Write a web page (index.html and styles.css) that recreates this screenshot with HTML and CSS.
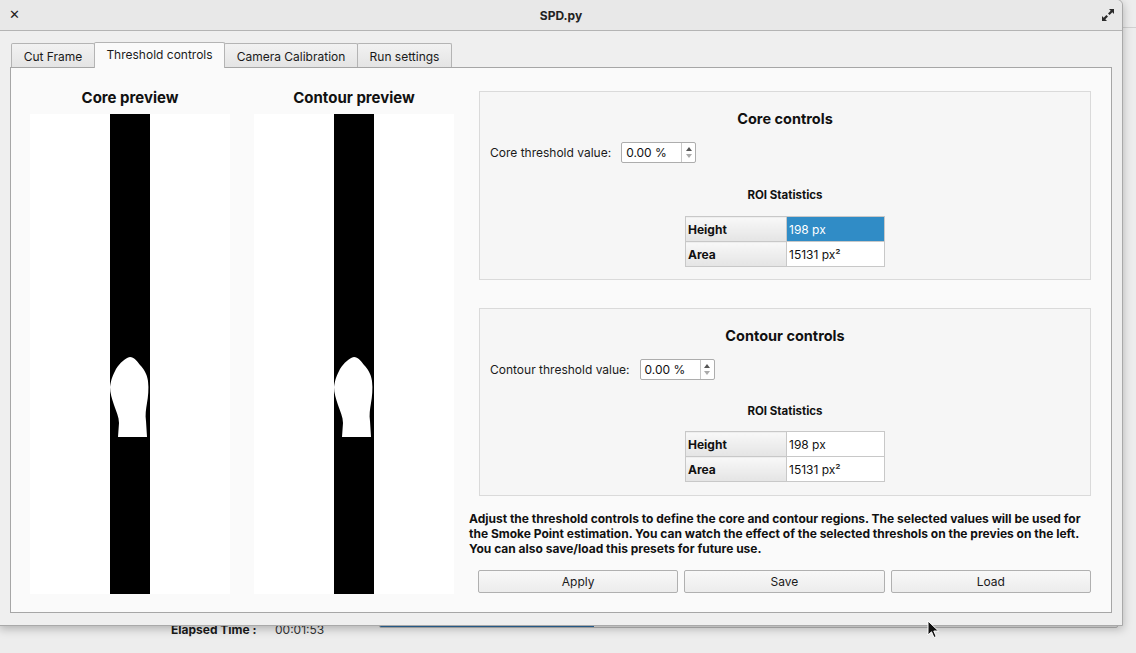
FILE: index.html
```html
<!DOCTYPE html>
<html>
<head>
<meta charset="utf-8">
<link rel="stylesheet" href="styles.css">
</head>
<body>
<div class="desktop">
  <div class="behind">
    <div class="behind-title"></div>
    <div class="behind-row">
      <span class="el-label">Elapsed Time :</span>
      <span class="el-value">00:01:53</span>
      <div class="progress"><div class="progress-fill"></div></div>
    </div>
  </div>

  <div class="window">
    <div class="titlebar">
      <span class="close">✕</span>
      <span class="title">SPD.py</span>
      <svg class="maxi" width="14" height="14" viewBox="0 0 14 14">
        <path d="M8 1 L13 1 L13 6 L11.3 4.3 L8.6 7 L7 5.4 L9.7 2.7 Z" fill="#2b2b2b"/>
        <path d="M6 13 L1 13 L1 8 L2.7 9.7 L5.4 7 L7 8.6 L4.3 11.3 Z" fill="#2b2b2b"/>
      </svg>
    </div>
    <div class="client">
      <div class="tabs">
        <div class="tab">Cut Frame</div>
        <div class="tab active">Threshold controls</div>
        <div class="tab">Camera Calibration</div>
        <div class="tab">Run settings</div>
      </div>
      <div class="pane">
        <div class="preview">
          <div class="ptitle">Core preview</div>
          <div class="pimg">
            <div class="strip">
              <svg class="flame" width="40" height="82" viewBox="0 0 40 82">
                <path d="M20 0 C24 0 27 4 30 8 C34 12 37 17 38 24 C39 32 38 40 37 46 C36 52 35 58 36 64 L37 80 L8 80 L9 66 C9 60 6 54 4 48 C2 42 0 36 0 30 C1 22 3 18 6 12 C10 6 15 1 20 0 Z" fill="#fff"/>
              </svg>
            </div>
          </div>
        </div>
        <div class="preview">
          <div class="ptitle">Contour preview</div>
          <div class="pimg">
            <div class="strip">
              <svg class="flame" width="40" height="82" viewBox="0 0 40 82">
                <path d="M20 0 C24 0 27 4 30 8 C34 12 37 17 38 24 C39 32 38 40 37 46 C36 52 35 58 36 64 L37 80 L8 80 L9 66 C9 60 6 54 4 48 C2 42 0 36 0 30 C1 22 3 18 6 12 C10 6 15 1 20 0 Z" fill="#fff"/>
              </svg>
            </div>
          </div>
        </div>
        <div class="right">
          <div class="group g1">
            <div class="gtitle">Core controls</div>
            <div class="row">
              <span class="lbl">Core threshold value:</span>
              <div class="spin"><span class="sval">0.00 %</span><span class="sbtn"><i class="up"></i><i class="dn"></i></span></div>
            </div>
            <div class="stitle">ROI Statistics</div>
            <table class="stats">
              <tr><th>Height</th><td class="sel">198 px</td></tr>
              <tr><th>Area</th><td>15131 px²</td></tr>
            </table>
          </div>
          <div class="group g2">
            <div class="gtitle">Contour controls</div>
            <div class="row">
              <span class="lbl">Contour threshold value:</span>
              <div class="spin"><span class="sval">0.00 %</span><span class="sbtn"><i class="up"></i><i class="dn"></i></span></div>
            </div>
            <div class="stitle">ROI Statistics</div>
            <table class="stats">
              <tr><th>Height</th><td>198 px</td></tr>
              <tr><th>Area</th><td>15131 px²</td></tr>
            </table>
          </div>
          <p class="info">Adjust the threshold controls to define the core and contour regions. The selected values will be used for the Smoke Point estimation. You can watch the effect of the selected threshols on the previes on the left. You can also save/load this presets for future use.</p>
          <div class="buttons">
            <button class="btn">Apply</button>
            <button class="btn">Save</button>
            <button class="btn">Load</button>
          </div>
        </div>
      </div>
    </div>
  </div>

  <svg class="cursor" width="14" height="20" viewBox="0 0 14 20">
    <path d="M1 1 L1 15 L4.5 11.8 L7 17.5 L9.2 16.5 L6.8 11 L11.5 11 Z" fill="#111" stroke="#fff" stroke-width="1"/>
  </svg>
</div>
</body>
</html>
```
FILE: styles.css
```css
* { box-sizing: border-box; }
html, body { margin: 0; padding: 0; }
body {
  width: 1136px; height: 653px; overflow: hidden;
  background: #ededed;
  font-family: Inter, "Noto Sans", "DejaVu Sans", sans-serif;
  font-size: 12px; color: #111;
}
.desktop { position: relative; width: 1136px; height: 653px; }

/* background window */
.behind {
  position: absolute; left: 0; top: 0; width: 1136px; height: 653px;
}
.behind-title {
  position: absolute; right: 0; top: 27px; width: 14px; height: 1px; background: #d0d0d0;
}
.behind-row {
  position: absolute; left: 171px; top: 620px;
  display: flex; align-items: center; height: 18px;
}
.el-label { font-weight: 700; font-size: 12px; width: 104px; color: #1a1a1a; }
.el-value { font-size: 12px; width: 104px; color: #333; }
.progress {
  width: 739px; height: 8px; margin-top: -10px;
  border: 1px solid #b8b8b8; background: #e6e6e6; border-radius: 2px; overflow: hidden;
}
.progress-fill { width: 214px; height: 100%; background: #2d6da3; }

/* main window */
.window {
  position: absolute; left: -1px; top: -1px; width: 1124px; height: 627px;
  background: #efefef;
  border: 1px solid #a9a9a9;
  border-top-right-radius: 6px;
  box-shadow: 0 3px 10px rgba(0,0,0,0.25);
  display: flex; flex-direction: column;
}
.titlebar {
  height: 31px; flex: none;
  background: #e8e8e8;
  border-bottom: 1px solid #b4b4b4;
  border-top-right-radius: 6px;
  display: flex; align-items: center; justify-content: center;
  position: relative;
}
.close { position: absolute; left: 9px; top: 6px; font-size: 13px; font-weight: 700; color: #222; }
.title { font-weight: 700; font-size: 12px; color: #222; }
.maxi { position: absolute; left: 1101px; top: 8px; }

.client { padding: 11px 10px 0 10px; }
.tabs { display: flex; height: 25px; align-items: flex-end; padding-left: 1px; }
.tab {
  height: 24px; padding: 2px 0 0 0;
  border: 1px solid #b4b4b4; border-bottom: none;
  margin-right: -1px;
  background: linear-gradient(#f2f2f2, #e4e4e4);
  border-radius: 2px 2px 0 0;
  font-size: 12px; color: #1a1a1a; white-space: nowrap;
  display: flex; align-items: center; justify-content: center;
}
.tab:nth-child(1) { width: 84px; }
.tab:nth-child(2) { width: 131px; }
.tab:nth-child(3) { width: 134px; }
.tab:nth-child(4) { width: 95px; }
.tab.active {
  height: 26px; background: #fafafa; position: relative; z-index: 2;
  margin-bottom: -1px; padding: 0 0 3px 0;
}
.pane {
  width: 1102px; height: 546px;
  background: #fafafa;
  border: 1px solid #a6a6a6;
  display: flex;
  padding: 15px 0 0 19px;
  position: relative; z-index: 1;
}
.preview { width: 200px; margin-right: 24px; display: flex; flex-direction: column; align-items: center; }
.preview:nth-child(2) { margin-right: 15px; }
.ptitle { font-weight: 700; font-size: 15px; height: 31px; line-height: 30px; color: #111; }
.pimg {
  width: 200px; height: 480px; background: #fff;
  display: flex; justify-content: center;
}
.strip { width: 40px; height: 480px; background: #000; position: relative; }
.flame { position: absolute; left: 0; top: 243px; }

.right { width: 623px; display: flex; flex-direction: column; }
.group {
  margin-left: 10px; width: 612px;
  background: #f6f6f6;
  border: 1px solid #dadada;
  display: flex; flex-direction: column; align-items: flex-start;
}
.g1 { margin-top: 8px; height: 189px; }
.g2 { margin-top: 28px; height: 188px; }
.gtitle { align-self: stretch; text-align: center; font-weight: 700; font-size: 14.5px; margin-top: 17px; height: 19px; line-height: 19px; }
.row { display: flex; align-items: center; padding-left: 10px; margin-top: 14px; height: 20px; }
.lbl { font-size: 12px; color: #1a1a1a; margin-right: 10px; }
.spin {
  width: 75px; height: 21px; background: #fff;
  border: 1px solid #adadad; border-radius: 2px;
  display: flex; align-items: stretch;
}
.sval { flex: 1; padding-left: 4px; line-height: 19px; font-size: 12px; }
.sbtn {
  width: 14px; border-left: 1px solid #c8c8c8;
  display: flex; flex-direction: column; align-items: center; justify-content: center; gap: 3px;
}
.sbtn i { display: block; width: 0; height: 0; border-left: 3.5px solid transparent; border-right: 3.5px solid transparent; }
.sbtn .up { border-bottom: 4px solid #555; }
.sbtn .dn { border-top: 4px solid #aaa; }
.stitle { align-self: stretch; text-align: center; font-weight: 700; font-size: 11.5px; height: 15px; line-height: 15px; }
.g1 .stitle { margin-top: 26px; }
.g2 .stitle { margin-top: 25px; }
.stats {
  border-collapse: collapse; margin-left: 205px;
  border: 1px solid #a8a8a8;
}
.g1 .stats { margin-top: 13px; }
.g2 .stats { margin-top: 12px; }
.stats th, .stats td {
  height: 25px; padding: 0 2px; font-size: 12px; text-align: left;
  border: 1px solid #c8c8c8;
}
.stats th { width: 101px; font-weight: 700; background: linear-gradient(#f8f8f8, #e4e4e4); }
.stats td { width: 98px; background: #fff; }
.stats td.sel { background: #308cc6; color: #fff; }
.info {
  margin: 15px 0 0 0; width: 613px; font-weight: 700; font-size: 12px; line-height: 15px; color: #111;
}
.buttons { display: flex; gap: 6px; margin-top: 14px; margin-left: 9px; width: 613px; }
.btn {
  flex: 1; height: 23px;
  font-family: inherit; font-size: 12px; color: #1a1a1a;
  background: linear-gradient(#f8f8f8, #ececec);
  border: 1px solid #b0b0b0; border-radius: 2px;
  padding: 0;
}
.cursor { position: absolute; left: 927px; top: 620px; }
```
